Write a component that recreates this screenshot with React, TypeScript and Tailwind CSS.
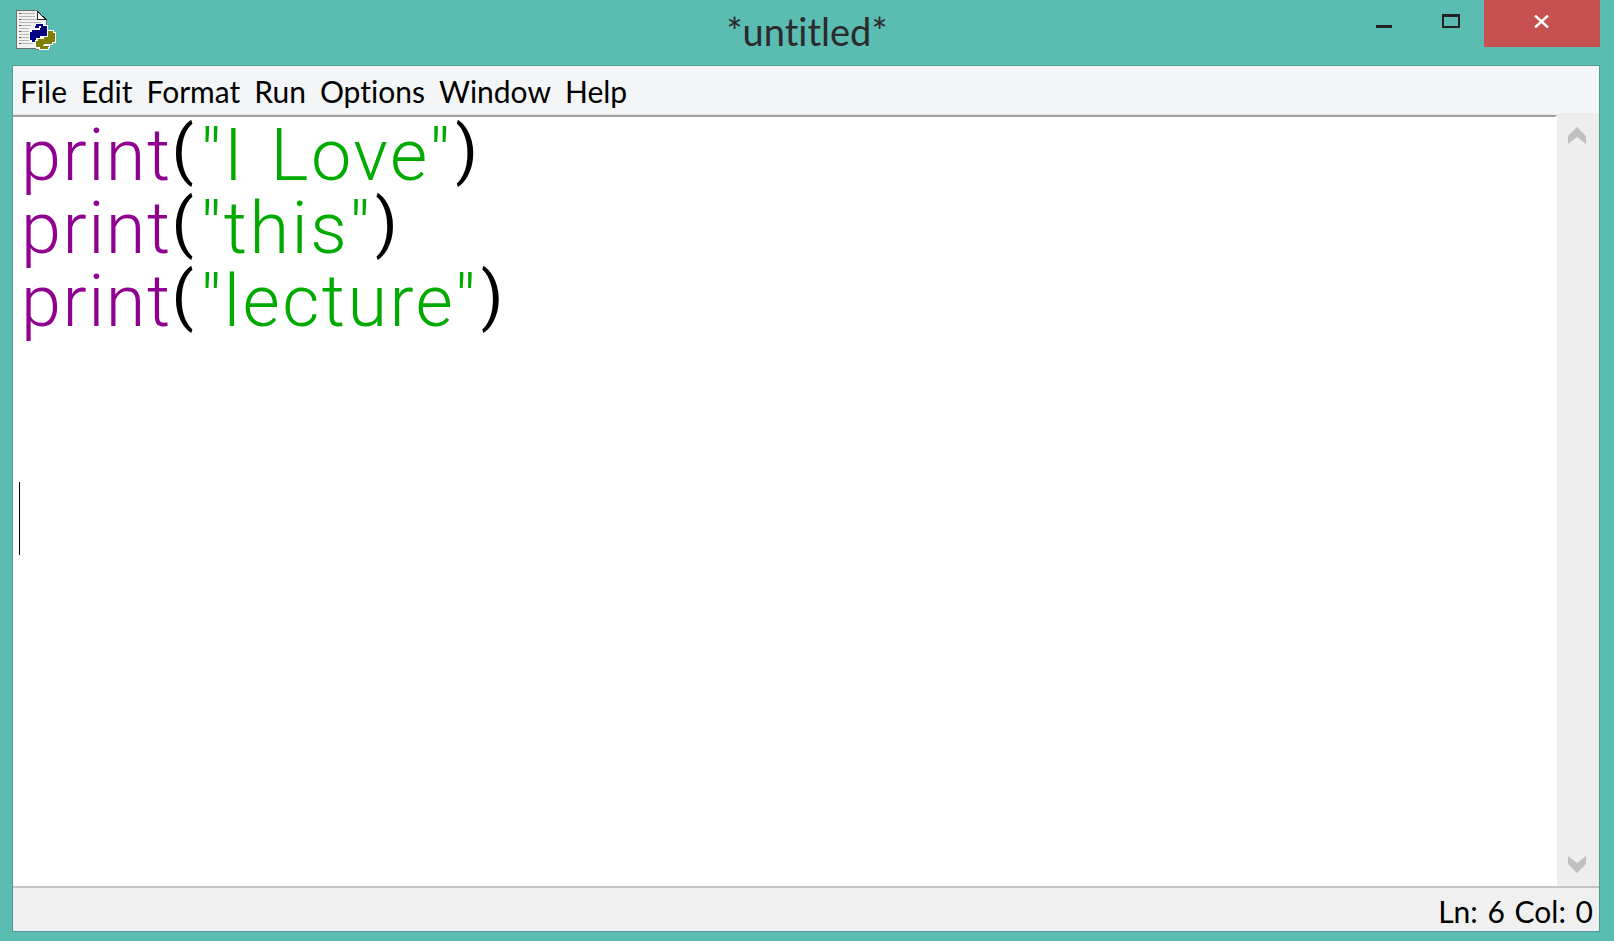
const UI_FONT = "font-['Lato',sans-serif] [font-variant-ligatures:none]";

const MENUS = ["File", "Edit", "Format", "Run", "Options", "Window", "Help"];

function FileIcon() {
  return (
    <svg width="40" height="41" viewBox="0 0 40 41" shapeRendering="crispEdges" className="block">
      {/* page */}
      <path d="M0.5 0.5H21L30 10V38L26 39.5H21L19 38.5H1L0.5 37Z" fill="#f2f2f2" stroke="#6e6e6e" />
      <path d="M21 1V9.5H30Z" fill="#ffffff" stroke="#222222" />
      {/* text lines on the page */}
      <g fill="#b5b5b5">
        <rect x="3" y="3" width="16" height="1" />
        <rect x="3" y="6" width="16" height="1" />
        <rect x="3" y="9" width="18" height="1" />
        <rect x="3" y="12" width="22" height="1" />
        <rect x="3" y="15" width="12" height="1" />
        <rect x="3" y="18" width="10" height="1" />
        <rect x="3" y="21" width="10" height="1" />
        <rect x="3" y="24" width="10" height="1" />
        <rect x="3" y="27" width="12" height="1" />
        <rect x="3" y="30" width="14" height="1" />
        <rect x="3" y="33" width="14" height="1" />
      </g>
      <g fill="#555555">
        <rect x="3" y="3" width="2" height="1" />
        <rect x="3" y="9" width="2" height="1" />
        <rect x="3" y="15" width="2" height="1" />
        <rect x="3" y="21" width="2" height="1" />
        <rect x="3" y="27" width="2" height="1" />
        <rect x="3" y="33" width="2" height="1" />
      </g>
      {/* python snakes */}
      <path
        d="M20 14H27V16H31V26H24V28H20V32H16V30H14V22H16V20H24V18H19V16H20Z"
        fill="#000080"
        stroke="#ffffff"
        strokeWidth="1.5"
        paintOrder="stroke"
      />
      <path
        d="M32 21H37V23H39V32H36V34H28V36H33V37H32V39H24V37H20V31H22V29H28V27H32Z"
        fill="#808000"
        stroke="#ffffff"
        strokeWidth="1.5"
        paintOrder="stroke"
      />
      <rect x="23" y="16" width="2" height="2" fill="#ffffff" />
      <rect x="27" y="35" width="2" height="1" fill="#ffffff" />
    </svg>
  );
}

function Chevron({ down }: { down?: boolean }) {
  return (
    <svg width="18" height="17" viewBox="0 0 18 17" className={down ? "block rotate-180" : "block"}>
      <path d="M9 0L18 9V17L9 10L0 17V9Z" fill="#c0c0c0" />
    </svg>
  );
}

function Paren({ children }: { children: string }) {
  return <span className="align-[8px] text-[64px] font-normal leading-none text-black">{children}</span>;
}

function CodeLine({ text }: { text: string }) {
  return (
    <div className="h-[73px] whitespace-pre">
      <span className="tracking-[1.5px] text-[#900090]">print</span>
      <Paren>(</Paren>
      <span className="ml-[7px] mr-[3px] tracking-[2.5px] [word-spacing:5px] text-[#00aa00]">"{text}"</span>
      <Paren>)</Paren>
    </div>
  );
}

export default function App() {
  return (
    <div className={`flex h-[941px] w-[1614px] flex-col overflow-hidden bg-[#5bbcb2] ${UI_FONT}`}>
      {/* title bar */}
      <div className="grid h-[65px] shrink-0 grid-cols-[1fr_auto_1fr]">
        <div className="pl-4 pt-2.5">
          <FileIcon />
        </div>
        <div className="pt-[5px] text-[38px] leading-[52px] text-[#2b2b2b]">*untitled*</div>
        <div className="flex items-start justify-end pr-3.5">
          <div className="mr-[50px] mt-[25px] h-[3px] w-4 bg-[#222222]" />
          <div className="mr-6 mt-[14px] h-[14px] w-[18px] border-2 border-t-[3px] border-[#222222]" />
          <div className="flex h-[47px] w-[116px] items-center justify-center bg-[#c75050] pb-1 pr-[2px]">
            <svg width="15" height="13" viewBox="0 0 15 13">
              <path d="M1 0.5L14 12.5M14 0.5L1 12.5" stroke="#ffffff" strokeWidth="2.4" />
            </svg>
          </div>
        </div>
      </div>

      {/* window */}
      <div className="ml-3 mr-[14px] flex h-[867px] flex-col border border-[#4f9c95] bg-[#f0f0f0]">
        <div className="flex h-[49px] shrink-0 gap-[14px] border-b border-[#e6e6e6] bg-[#f4f5f7] pl-[7px] pt-[4px] text-[30px] leading-[42px] text-black">
          {MENUS.map((m) => (
            <span key={m}>{m}</span>
          ))}
        </div>

        <div className="flex min-h-0 flex-1">
          <div className="min-w-0 flex-1 border-r-2 border-t-2 border-r-white border-t-[#a0a0a0] bg-white pl-2 pt-[2px] font-['Roboto',sans-serif] text-[72px] font-light leading-[73px]">
            <CodeLine text="I Love" />
            <CodeLine text="this" />
            <CodeLine text="lecture" />
            <div className="h-[144px]" />
            <div className="ml-[-2px] h-[73px] w-px bg-black" />
          </div>
          <div className="flex w-[42px] shrink-0 flex-col items-center justify-between bg-[#eeeeee] pb-[13px] pr-[2px] pt-[12px]">
            <Chevron />
            <Chevron down />
          </div>
        </div>

        <div className="h-[45px] shrink-0 border-t-2 border-[#c4c4c4] bg-[#f0f0f0] pr-1.5 pt-[2px] text-right text-[30px] leading-[42px] text-black [word-spacing:2px]">
          Ln: 6 Col: 0
        </div>
      </div>
    </div>
  );
}
